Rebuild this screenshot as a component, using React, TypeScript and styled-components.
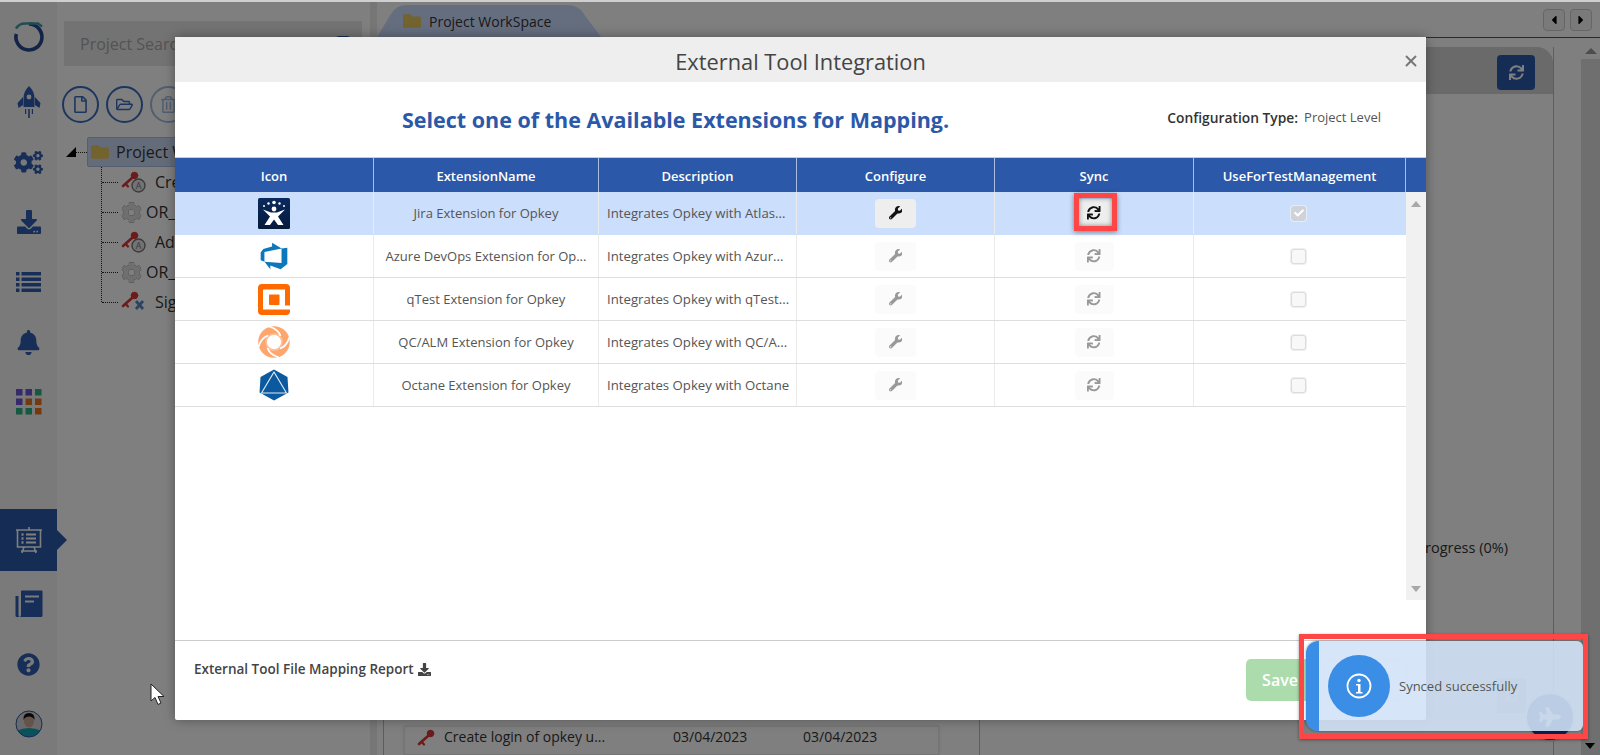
import React from "react";
import styled, { createGlobalStyle } from "styled-components";
import { X } from "lucide-react";
import {
  FaBell,
  FaCog,
  FaCogs,
  FaDownload,
  FaFolder,
  FaPlane,
  FaQuestionCircle,
  FaRegFile,
  FaRegFolderOpen,
  FaRegTrashAlt,
  FaSync,
  FaWrench,
  FaCheck,
  FaCaretLeft,
  FaCaretRight,
} from "react-icons/fa";

const FONT = `"Open Sans", "Noto Sans", "Liberation Sans", sans-serif`;
const BLUE = "#2b58a8";

const GlobalStyle = createGlobalStyle`
  html, body {
    margin: 0;
    height: 100%;
    overflow: hidden;
    background: #fff;
    font-family: ${FONT};
  }
  * {
    box-sizing: border-box;
  }
`;

const Page = styled.div`
  width: 1600px;
  height: 755px;
  display: flex;
  flex-direction: column;
  position: relative;
  overflow: hidden;
`;

const TopStrip = styled.div`
  height: 2px;
  flex: none;
  background: #cfcfcf;
  position: relative;
  z-index: 20;
`;

const Shell = styled.div`
  flex: 1;
  display: flex;
  min-height: 0;
`;

/* left rail */
const Rail = styled.nav`
  width: 57px;
  flex: none;
  background: #f4f4f4;
  display: flex;
  flex-direction: column;
  align-items: stretch;
  padding-bottom: 1px;
`;

const LogoItem = styled.div`
  height: 70px;
  display: flex;
  align-items: center;
  justify-content: center;
`;

const RailItem = styled.div<{ $active?: boolean }>`
  height: ${(p) => (p.$active ? "62px" : "60px")};
  margin-bottom: ${(p) => (p.$active ? "3px" : "0")};
  flex: none;
  display: flex;
  align-items: center;
  justify-content: center;
  position: relative;
  color: ${(p) => (p.$active ? "#fff" : "#2f5fb0")};
  background: ${(p) => (p.$active ? BLUE : "transparent")};
  font-size: 26px;

  ${(p) =>
    p.$active &&
    `&::after {
      content: "";
      position: absolute;
      left: 100%;
      top: 21px;
      border-left: 10px solid ${BLUE};
      border-top: 10px solid transparent;
      border-bottom: 10px solid transparent;
    }`}
`;

const RailSpacer = styled.div`
  flex: 1;
`;

/* tree panel */
const TreePanel = styled.aside`
  width: 313px;
  flex: none;
  background: #fff;
  padding: 19px 8px 0 7px;
`;

const SearchBox = styled.div`
  height: 45px;
  background: #e6e6e6;
  color: #a8a8a8;
  font-size: 16px;
  padding: 0 12px 0 16px;
  display: flex;
  align-items: center;
  justify-content: space-between;
`;

const SearchMark = styled.div`
  width: 14px;
  height: 16px;
  border-radius: 3px;
  background: ${BLUE};
`;

const TreeTools = styled.div`
  display: flex;
  gap: 7px;
  margin: 20px 0 14px -2px;
`;

const CircleTool = styled.div<{ $faded?: boolean }>`
  width: 37px;
  height: 37px;
  border-radius: 50%;
  border: 2px solid ${(p) => (p.$faded ? "#a3bce4" : "#3a6cc0")};
  color: ${(p) => (p.$faded ? "#a3bce4" : "#3a6cc0")};
  display: flex;
  align-items: center;
  justify-content: center;
  font-size: 17px;
`;

const TreeRoot = styled.div`
  display: flex;
  align-items: center;
  position: relative;
  margin-left: 23px;
  height: 30px;
  background: #c9d9f2;
  border: 1px solid #a9bfe2;
  border-radius: 2px;
  padding-left: 3px;
  font-size: 16px;
  color: #333;
  gap: 7px;
  white-space: nowrap;

  &::before {
    content: "";
    position: absolute;
    left: -22px;
    top: 9px;
    border-bottom: 10px solid #000;
    border-left: 10px solid transparent;
  }

  &::after {
    content: "";
    position: absolute;
    left: -12px;
    top: 14px;
    width: 11px;
    border-top: 1px dotted #222;
  }
`;

const TreeList = styled.div`
  margin-left: 37px;
  border-left: 1px dotted #222;
  height: 135px;
`;

const TreeRow = styled.div<{ $indent: number }>`
  height: 30px;
  display: flex;
  align-items: center;
  position: relative;
  padding-left: 19px;
  gap: ${(p) => p.$indent}px;
  font-size: 16px;
  color: #333;
  white-space: nowrap;

  &::before {
    content: "";
    width: 16px;
    position: absolute;
    left: 0;
    top: 15px;
    border-top: 1px dotted #222;
  }
`;

const GearIcon = styled(FaCog)`
  color: #dedede;
  font-size: 21px;
  filter: drop-shadow(0 0 0.6px #333);
`;

const Splitter = styled.div`
  width: 7px;
  flex: none;
  background: #ececec;
`;

/* workspace behind the dialog */
const Workspace = styled.main`
  flex: 1;
  min-width: 0;
  display: flex;
  flex-direction: column;
  background: #fff;
`;

const TabStrip = styled.div`
  height: 36px;
  flex: none;
  border-bottom: 1px solid ${BLUE};
  display: flex;
  align-items: flex-end;
  padding: 0 8px 0 0;
`;

const Tab = styled.div`
  width: 224px;
  height: 32px;
  background: #cbdcff;
  clip-path: path("M0 32 L14 9 Q19 0 30 0 H190 Q202 0 207 9 L224 32 Z");
  display: flex;
  align-items: center;
  gap: 8px;
  padding-left: 26px;
  font-size: 14px;
  color: #333;
`;

const FolderIcon = styled(FaFolder)`
  color: #e7c65c;
  font-size: 18px;
  flex: none;
`;

const NavButtons = styled.div`
  margin-left: auto;
  display: flex;
  gap: 5px;
  align-self: flex-start;
  margin-top: 7px;
`;

const NavButton = styled.div`
  width: 22px;
  height: 22px;
  border: 1px solid #ccc;
  border-radius: 4px;
  display: flex;
  align-items: center;
  justify-content: center;
  font-size: 14px;
  color: #000;
  background: #f4f4f4;
`;

const WorkBody = styled.div`
  flex: 1;
  min-height: 0;
  display: flex;
  padding-left: 6px;
`;

const Panel = styled.section`
  width: 1171px;
  flex: none;
  margin-top: 9px;
  display: flex;
  flex-direction: column;
  border-left: 1px solid #bbb;
  border-right: 1px solid #bbb;
`;

const PanelHead = styled.div`
  height: 47px;
  flex: none;
  background: #d4d4d4;
  border-radius: 0 16px 0 0;
  display: flex;
  justify-content: flex-end;
  padding: 8px 18px 0 0;
`;

const HeadButton = styled.div`
  width: 38px;
  height: 35px;
  background: ${BLUE};
  border-radius: 4px;
  color: #fff;
  font-size: 15px;
  display: flex;
  align-items: center;
  justify-content: center;
`;

const PanelBody = styled.div`
  flex: 1;
  display: grid;
  grid-template-columns: 595px 1fr;
  min-height: 0;
`;

const LeftColumn = styled.div`
  display: flex;
  flex-direction: column;
  justify-content: flex-start;
  padding: 632px 40px 0 20px;
  overflow: hidden;
`;

const RightColumn = styled.div`
  border-left: 1px solid #bbb;
  display: flex;
  flex-direction: column;
  align-items: flex-end;
  padding: 444px 45px 0 0;
`;

const Legend = styled.div`
  font-size: 14.5px;
  color: #333;
`;

const FaintSync = styled.div`
  width: 29px;
  height: 35px;
  background: #d0d0d0;
  color: #fff;
  display: flex;
  align-items: center;
  justify-content: center;
  font-size: 13px;
  margin: 121px -18px 0 0;
`;

const TestCard = styled.div`
  height: 40px;
  border: 1px solid #e8e8e8;
  display: grid;
  grid-template-columns: 27px 229px 130px 1fr;
  align-items: center;
  padding: 0 0 8px 12px;
  font-size: 14px;
  color: #333;
  box-shadow: 0 0 3px rgba(0, 0, 0, 0.15);
`;

const PageScroll = styled.div`
  width: 19px;
  margin-left: auto;
  flex: none;
  display: flex;
  flex-direction: column;
  margin-top: 2px;
`;

const PageScrollTop = styled.div`
  height: 19px;
  flex: none;
  background: #fff;
  display: flex;
  justify-content: center;
  padding-top: 8px;

  &::before {
    content: "";
    height: 0;
    border-bottom: 6px solid #999;
    border-left: 6px solid transparent;
    border-right: 6px solid transparent;
  }
`;

const PageScrollTrack = styled.div`
  flex: 1;
  background: #dedede;
`;

const Backdrop = styled.div`
  position: absolute;
  inset: 2px 0 0 0;
  background: rgba(0, 0, 0, 0.5);
  z-index: 5;
`;

const ChatBubble = styled.div`
  position: absolute;
  left: 1525px;
  top: 692px;
  width: 50px;
  height: 50px;
  border-radius: 50%;
  background: #1c3c90;
  color: #fff;
  border: 2px solid #eee;
  display: flex;
  align-items: center;
  justify-content: center;
  font-size: 22px;
`;

const BottomCaret = styled.div`
  position: absolute;
  left: 1585px;
  top: 743px;
  border-top: 6px solid #000;
  border-left: 5px solid transparent;
  border-right: 5px solid transparent;
`;

/* dialog */
const Modal = styled.div`
  position: absolute;
  left: 175px;
  top: 37px;
  width: 1251px;
  height: 683px;
  background: #fff;
  z-index: 10;
  display: flex;
  flex-direction: column;
  border-radius: 2px;
  box-shadow: 0 0 12px rgba(0, 0, 0, 0.35);
`;

const ModalHeader = styled.header`
  height: 45px;
  flex: none;
  background: #eeeeee;
  display: flex;
  align-items: center;
  justify-content: center;
  position: relative;
  font-size: 21.8px;
  color: #444;
  padding-top: 3px;
`;

const CloseButton = styled(X)`
  position: absolute;
  right: 6px;
  top: 15px;
  color: #777;
`;

const Heading = styled.div`
  height: 75px;
  flex: none;
  display: flex;
  align-items: center;
  padding: 0 45px 0 227px;
`;

const HeadingTitle = styled.h2`
  margin: 0;
  font-size: 21.5px;
  font-weight: 700;
  color: ${BLUE};
`;

const ConfigType = styled.div`
  margin: 0 0 5px auto;
  font-size: 13px;
  color: #555;
  display: flex;
  gap: 6px;

  b {
    color: #333;
    font-size: 13.8px;
    font-weight: 600;
  }
`;

const COLUMNS = "199px 225px 198px 198px 199px 212px";

const TableHead = styled.div`
  height: 35px;
  flex: none;
  display: grid;
  grid-template-columns: ${COLUMNS} 20px;
  background: ${BLUE};
  border-top: 1px solid #ccc;
`;

const HeadCell = styled.div`
  display: flex;
  align-items: center;
  justify-content: center;
  color: #fff;
  font-size: 13px;
  font-weight: 600;
  padding-top: 1px;
  border-right: 1px solid #a9bde0;

  &:last-child {
    border-right: 0;
  }
`;

const TableBody = styled.div`
  height: 408px;
  flex: none;
  display: flex;
`;

const Rows = styled.div`
  flex: 1;
  min-width: 0;
`;

const Row = styled.div<{ $selected?: boolean }>`
  height: 43px;
  display: grid;
  grid-template-columns: ${COLUMNS};
  background: ${(p) => (p.$selected ? "#cbdefc" : "#fff")};
  border-bottom: 1px solid ${(p) => (p.$selected ? "#cbdefc" : "#dedede")};
`;

const Cell = styled.div<{ $left?: boolean }>`
  display: flex;
  align-items: center;
  justify-content: ${(p) => (p.$left ? "flex-start" : "center")};
  padding-left: ${(p) => (p.$left ? "8px" : "0")};
  border-right: 1px solid #ebebeb;
  font-size: ${(p) => (p.$left ? "13.2px" : "13px")};
  color: #555;
  white-space: nowrap;
  position: relative;

  &:last-child {
    border-right: 0;
  }
`;

const ToolButton = styled.div<{ $on?: boolean; $wide?: boolean }>`
  width: ${(p) => (p.$wide ? "41px" : "39px")};
  height: 29px;
  border-radius: 4px;
  background: ${(p) => (p.$on ? "#eeeeee" : "#fbfbfb")};
  color: ${(p) => (p.$on ? "#111" : "#999")};
  font-size: 13.5px;
  display: flex;
  align-items: center;
  justify-content: center;
`;

const HighlightBox = styled.div`
  position: absolute;
  left: 79px;
  top: 1px;
  width: 43px;
  height: 38px;
  border: 5px solid #ff4646;
  box-shadow: 0 1px 5px rgba(0, 0, 0, 0.45), inset 0 0 5px rgba(0, 0, 0, 0.45);
`;

const CheckBox = styled.div<{ $checked?: boolean }>`
  width: 15px;
  height: 15px;
  margin-right: 3px;
  border-radius: 3px;
  background: ${(p) => (p.$checked ? "#cfd3d9" : "#f8f8f8")};
  border: 1px solid ${(p) => (p.$checked ? "#cfd3d9" : "#dcdcdc")};
  box-shadow: 0 0 0 1px ${(p) => (p.$checked ? "#e4ecf8" : "#efefef")};
  color: #fff;
  font-size: 10px;
  display: flex;
  align-items: center;
  justify-content: center;
`;

const ScrollTrack = styled.div`
  width: 20px;
  flex: none;
  background: #f1f1f1;
  display: flex;
  flex-direction: column;
  justify-content: space-between;
  align-items: center;
  padding: 9px 0 8px;
`;

const ScrollArrow = styled.div<{ $down?: boolean }>`
  border-left: 5px solid transparent;
  border-right: 5px solid transparent;
  ${(p) => (p.$down ? "border-top: 6px solid #a8a8a8;" : "border-bottom: 6px solid #a8a8a8;")}
`;

const ModalFooter = styled.footer`
  margin-top: auto;
  height: 80px;
  flex: none;
  border-top: 1px solid #ccc;
  display: flex;
  justify-content: space-between;
  padding: 18px 19px 0 19px;
`;

const ReportLink = styled.div`
  display: flex;
  align-items: center;
  gap: 4px;
  height: 20px;
  font-size: 13.5px;
  font-weight: 600;
  color: #444;
  svg {
    font-size: 13px;
  }
`;

const FooterButtons = styled.div`
  display: flex;
  gap: 10px;
`;

const SaveButton = styled.div`
  width: 68px;
  height: 42px;
  border-radius: 5px;
  background: #acdcac;
  color: #fff;
  font-size: 16px;
  font-weight: 600;
  display: flex;
  align-items: center;
  justify-content: center;
`;

const CancelButton = styled.div`
  width: 83px;
  height: 42px;
  border-radius: 5px;
  border: 1px solid #e8e8e8;
  color: #999;
  font-size: 16px;
  display: flex;
  align-items: center;
  justify-content: center;
`;

/* toast and its annotation */
const Toast = styled.div`
  position: absolute;
  left: 1306px;
  top: 641px;
  width: 277px;
  height: 90px;
  z-index: 15;
  background: rgba(209, 227, 247, 0.89);
  border-left: 13px solid #3a8ee6;
  border-radius: 12px 6px 6px 12px;
  box-shadow: 0 0 3px rgba(0, 0, 0, 0.4);
  display: flex;
  align-items: center;
  gap: 9px;
  padding-left: 9px;
  font-size: 13px;
  color: #555;
`;

const ToastIcon = styled.div`
  width: 62px;
  height: 62px;
  border-radius: 50%;
  background: #3a8ee6;
  flex: none;
  display: flex;
  align-items: center;
  justify-content: center;
`;

const ToastFrame = styled.div`
  position: absolute;
  left: 1299px;
  top: 634px;
  width: 289px;
  height: 105px;
  z-index: 16;
  border: 5px solid #ff4646;
  box-shadow: 0 1px 3px rgba(0, 0, 0, 0.4);
`;

const Cursor = styled.svg`
  position: absolute;
  left: 150px;
  top: 683px;
  z-index: 18;
`;

const BrandLogo = () => (
  <svg width="32" height="32" viewBox="0 0 32 32" fill="none">
    <path d="M16 3 A13 13 0 1 1 3.3 13" stroke="#244a8f" strokeWidth="3.6" />
    <path d="M3 7.5 Q6 2.5 12 2.5 H25 L29 5.5" stroke="#3f9aa6" strokeWidth="2.6" />
  </svg>
);

const RocketIcon = () => (
  <svg width="24" height="34" viewBox="0 0 24 34" fill="currentColor">
    <path d="M12 1 C16 5 17.5 9 17.5 13 L17.5 22 L6.5 22 L6.5 13 C6.5 9 8 5 12 1 Z" />
    <path d="M6 12 L0.5 18 L1.5 23 L6 20 Z M18 12 L23.5 18 L22.5 23 L18 20 Z" />
    <circle cx="12" cy="12" r="2.4" fill="#f4f4f4" />
    <path d="M11.2 24 h1.6 v9 h-1.6 Z M8 24 h1.2 v5 H8 Z M14.8 24 H16 v5 h-1.2 Z" />
  </svg>
);

const ListIcon = () => (
  <svg width="25" height="20" viewBox="0 0 25 20" fill="currentColor">
    {[0, 5.5, 11, 16.5].map((y) => (
      <g key={y}>
        <rect x="0" y={y} width="3.5" height="3.5" />
        <rect x="5.5" y={y} width="19.5" height="3.5" />
      </g>
    ))}
  </svg>
);

const GridIcon = () => {
  const colours = ["#6a56d8", "#6a56d8", "#2fb380", "#6a56d8", "#e8741e", "#e8741e", "#2fb380", "#2fb380", "#e8741e"];
  return (
    <svg width="26" height="26" viewBox="0 0 26 26">
      {colours.map((c, i) => (
        <rect key={i} x={(i % 3) * 9.5} y={Math.floor(i / 3) * 9.5} width="6.5" height="6.5" fill={c} />
      ))}
    </svg>
  );
};

const BoardIcon = () => (
  <svg width="28" height="28" viewBox="0 0 28 28" fill="none" stroke="#fff" strokeWidth="1.6">
    <path d="M1 4 H27 M2.5 4 V21 H25.5 V4 M14 1 V4 M9 21 L7 27 M19 21 L21 27 M6 25 H22" />
    <path d="M11 8.5 H21 M11 12.5 H21 M11 16.5 H21" strokeWidth="2" />
    <path d="M6.5 8.5 H8.5 M6.5 12.5 H8.5 M6.5 16.5 H8.5" strokeWidth="2.4" />
  </svg>
);

const BookIcon = () => (
  <svg width="28" height="28" viewBox="0 0 28 28" fill="currentColor">
    <path d="M6 1.5 Q6 0.5 7 0.5 H26.5 Q27.5 0.5 27.5 1.5 V25.5 Q27.5 27 26 27 H5 Q6 26 6 25 Z" />
    <path d="M0.5 6 H3.5 V25 Q3.5 26 4.5 27 H2 Q0.5 27 0.5 25.5 Z" />
    <path d="M10 6.5 H24 M10 11.5 H19" stroke="#f4f4f4" strokeWidth="1.8" />
  </svg>
);

const Avatar = () => (
  <svg width="28" height="28" viewBox="0 0 28 28">
    <clipPath id="avatar-clip">
      <circle cx="14" cy="14" r="13" />
    </clipPath>
    <circle cx="14" cy="14" r="13" fill="#d4d4d4" />
    <g clipPath="url(#avatar-clip)">
      <path d="M1 28 V21 Q8 18 14 18 Q20 18 27 21 V28 Z" fill="#17a2b8" />
      <ellipse cx="14" cy="11" rx="5" ry="6.5" fill="#c9a68c" />
      <path d="M8.5 10 Q8 3 14 3 Q20 3 19.5 10 Q18 6.5 14 6.5 Q10 6.5 8.5 10 Z" fill="#111" />
    </g>
    <circle cx="14" cy="14" r="13" fill="none" stroke="#2b58a8" strokeWidth="1" />
  </svg>
);

const KeyShape = () => (
  <g fill="none" stroke="#d93535" strokeLinecap="round">
    <path d="M2 16 L11 8" strokeWidth="2.6" />
    <path d="M4.5 13.8 L7 16.5" strokeWidth="2.2" />
    <circle cx="13.5" cy="5.5" r="3.3" fill="#d93535" strokeWidth="1" />
  </g>
);

const BadgeLetter = styled.text`
  font-family: ${FONT};
  font-size: 9px;
  fill: #777;
`;

const ActionKey = () => (
  <svg width="26" height="24" viewBox="0 0 26 24">
    <KeyShape />
    <circle cx="17.5" cy="15.5" r="6.5" fill="#e6e6e6" stroke="#777" strokeWidth="1.4" />
    <BadgeLetter x="17.5" y="18.8" textAnchor="middle">
      A
    </BadgeLetter>
  </svg>
);

const SignKey = () => (
  <svg width="26" height="24" viewBox="0 0 26 24">
    <KeyShape />
    <path d="M15 11 L22 19 M22 11 L15 19" stroke="#5b86c4" strokeWidth="2.8" />
  </svg>
);

const SmallKey = () => (
  <svg width="18" height="18" viewBox="0 0 18 18">
    <KeyShape />
  </svg>
);

const JiraLogo = () => (
  <svg width="32" height="31" viewBox="0 0 32 31">
    <defs>
      <linearGradient id="jira-bg" x1="0" y1="0" x2="0" y2="1">
        <stop offset="0" stopColor="#0a2a5e" />
        <stop offset="1" stopColor="#061a3c" />
      </linearGradient>
    </defs>
    <rect width="32" height="31" rx="1.5" fill="url(#jira-bg)" />
    <circle cx="16" cy="4.5" r="1.8" fill="#fff" />
    <circle cx="10.5" cy="5.5" r="1.2" fill="#fff" />
    <circle cx="21.5" cy="5.5" r="1.2" fill="#fff" />
    <circle cx="6" cy="8" r="1" fill="#fff" />
    <circle cx="26" cy="8" r="1" fill="#fff" />
    <circle cx="16" cy="11" r="2.4" fill="#fff" />
    <path d="M5 11.5 L13 14.5 H19 L27 11.5 L20 18.5 L25.5 27 H20 L16 21.5 L12 27 H6.5 L12 18.5 Z" fill="#fff" />
  </svg>
);

const AzureLogo = () => (
  <svg width="30" height="30" viewBox="0 0 18 18">
    <path
      d="M17 4v9.74l-4 3.28-6.2-2.26V17l-3.51-4.59 10.23.8V4.44zm-3.41.49L7.85 1v2.29L2.58 4.84 1 6.87v4.61l2.26 1V6.57z"
      fill="#0c78bb"
    />
  </svg>
);

const QTestLogo = () => (
  <svg width="32" height="31" viewBox="0 0 32 31">
    <rect width="32" height="31" rx="4" fill="#ff6a00" />
    <path d="M5 5.5 H27 V21.5 H32 V25.5 H5 Z" fill="#fff" />
    <rect x="11" y="10.5" width="10.5" height="10.5" rx="0.8" fill="#ff6a00" />
  </svg>
);

const QcLogo = () => (
  <svg width="32" height="32" viewBox="0 0 32 32" fill="none">
    <circle cx="16" cy="16" r="11.5" stroke="#ffa66e" strokeWidth="8.5" />
    <circle cx="16" cy="16" r="8" stroke="#ffc39c" strokeWidth="1.5" />
    {[0, 90, 180, 270].map((r) => (
      <path
        key={r}
        transform={`rotate(${r} 16 16)`}
        d="M22.5 10 C21 5.5 16 2 11 0.5"
        stroke="#fff"
        strokeWidth="1.8"
      />
    ))}
  </svg>
);

const OctaneLogo = () => (
  <svg width="30" height="32" viewBox="0 0 30 32">
    <path d="M15 0.5 L28.5 8 L29.5 23.5 L15 31.5 L0.5 23.5 L1.5 8 Z" fill="#0b5aa0" />
    <path d="M15 3 L2.5 24 H27.5 Z" fill="#0b5aa0" stroke="#dfe9f4" strokeWidth="1.2" strokeLinejoin="round" />
  </svg>
);

const InfoGlyph = () => (
  <svg width="26" height="26" viewBox="0 0 26 26" fill="none" stroke="#fff">
    <circle cx="13" cy="13" r="11.5" strokeWidth="1.8" />
    <circle cx="13" cy="7.5" r="1.7" fill="#fff" stroke="none" />
    <path d="M10 11 H14.5 V19 H16.5 V20.5 H10 V19 H12 V12.5 H10 Z" fill="#fff" stroke="none" />
  </svg>
);

type Extension = {
  name: string;
  description: string;
  logo: React.ReactNode;
};

const extensions: Extension[] = [
  { name: "Jira Extension for Opkey", description: "Integrates Opkey with Atlas...", logo: <JiraLogo /> },
  { name: "Azure DevOps Extension for Op...", description: "Integrates Opkey with Azur...", logo: <AzureLogo /> },
  { name: "qTest Extension for Opkey", description: "Integrates Opkey with qTest...", logo: <QTestLogo /> },
  { name: "QC/ALM Extension for Opkey", description: "Integrates Opkey with QC/A...", logo: <QcLogo /> },
  { name: "Octane Extension for Opkey", description: "Integrates Opkey with Octane", logo: <OctaneLogo /> },
];

const treeItems = [
  { label: "Create login", icon: <ActionKey /> },
  { label: "OR_Login", icon: <GearIcon /> },
  { label: "Add Employee", icon: <ActionKey /> },
  { label: "OR_Employee", icon: <GearIcon /> },
  { label: "Sign out", icon: <SignKey /> },
];

const headers = ["Icon", "ExtensionName", "Description", "Configure", "Sync", "UseForTestManagement", ""];

export default function App() {
  return (
    <Page>
      <GlobalStyle />
      <TopStrip />
      <Shell>
        <Rail>
          <LogoItem>
            <BrandLogo />
          </LogoItem>
          <RailItem>
            <RocketIcon />
          </RailItem>
          <RailItem>
            <FaCogs size={29} />
          </RailItem>
          <RailItem>
            <FaDownload size={24} />
          </RailItem>
          <RailItem>
            <ListIcon />
          </RailItem>
          <RailItem>
            <FaBell size={25} />
          </RailItem>
          <RailItem>
            <GridIcon />
          </RailItem>
          <RailSpacer />
          <RailItem $active>
            <BoardIcon />
          </RailItem>
          <RailItem>
            <BookIcon />
          </RailItem>
          <RailItem>
            <FaQuestionCircle size={23} />
          </RailItem>
          <RailItem>
            <Avatar />
          </RailItem>
        </Rail>

        <TreePanel>
          <SearchBox>
            Project Search
            <SearchMark />
          </SearchBox>
          <TreeTools>
            <CircleTool>
              <FaRegFile />
            </CircleTool>
            <CircleTool>
              <FaRegFolderOpen />
            </CircleTool>
            <CircleTool $faded>
              <FaRegTrashAlt />
            </CircleTool>
          </TreeTools>
          <TreeRoot>
            <FolderIcon />
            Project WorkSpace
          </TreeRoot>
          <TreeList>
            {treeItems.map((item) => (
              <TreeRow key={item.label} $indent={item.label.startsWith("OR_") ? 4 : 8}>
                {item.icon}
                {item.label}
              </TreeRow>
            ))}
          </TreeList>
        </TreePanel>
        <Splitter />

        <Workspace>
          <TabStrip>
            <Tab>
              <FolderIcon />
              Project WorkSpace
            </Tab>
            <NavButtons>
              <NavButton>
                <FaCaretLeft />
              </NavButton>
              <NavButton>
                <FaCaretRight />
              </NavButton>
            </NavButtons>
          </TabStrip>
          <WorkBody>
            <Panel>
              <PanelHead>
                <HeadButton>
                  <FaSync />
                </HeadButton>
              </PanelHead>
              <PanelBody>
                <LeftColumn>
                  <TestCard>
                    <SmallKey />
                    <span>Create login of opkey u...</span>
                    <span>03/04/2023</span>
                    <span>03/04/2023</span>
                  </TestCard>
                </LeftColumn>
                <RightColumn>
                  <Legend>In Progress (0%)</Legend>
                  <FaintSync>
                    <FaSync />
                  </FaintSync>
                </RightColumn>
              </PanelBody>
            </Panel>
            <PageScroll>
              <PageScrollTop />
              <PageScrollTrack />
            </PageScroll>
          </WorkBody>
        </Workspace>
      </Shell>

      <ChatBubble>
        <FaPlane />
      </ChatBubble>
      <BottomCaret />
      <Backdrop />

      <Modal>
        <ModalHeader>
          External Tool Integration
          <CloseButton size={18} strokeWidth={2.6} />
        </ModalHeader>
        <Heading>
          <HeadingTitle>Select one of the Available Extensions for Mapping.</HeadingTitle>
          <ConfigType>
            <b>Configuration Type:</b> Project Level
          </ConfigType>
        </Heading>
        <TableHead>
          {headers.map((h, i) => (
            <HeadCell key={i}>{h}</HeadCell>
          ))}
        </TableHead>
        <TableBody>
          <Rows>
            {extensions.map((ext, i) => (
              <Row key={ext.name} $selected={i === 0}>
                <Cell>{ext.logo}</Cell>
                <Cell>{ext.name}</Cell>
                <Cell $left>{ext.description}</Cell>
                <Cell>
                  <ToolButton $on={i === 0} $wide>
                    <FaWrench />
                  </ToolButton>
                </Cell>
                <Cell>
                  <ToolButton $on={i === 0}>
                    <FaSync />
                  </ToolButton>
                  {i === 0 && <HighlightBox />}
                </Cell>
                <Cell>
                  <CheckBox $checked={i === 0}>{i === 0 && <FaCheck />}</CheckBox>
                </Cell>
              </Row>
            ))}
          </Rows>
          <ScrollTrack>
            <ScrollArrow />
            <ScrollArrow $down />
          </ScrollTrack>
        </TableBody>
        <ModalFooter>
          <ReportLink>
            External Tool File Mapping Report <FaDownload />
          </ReportLink>
          <FooterButtons>
            <SaveButton>Save</SaveButton>
            <CancelButton>Cancel</CancelButton>
          </FooterButtons>
        </ModalFooter>
      </Modal>

      <Toast>
        <ToastIcon>
          <InfoGlyph />
        </ToastIcon>
        Synced successfully
      </Toast>
      <ToastFrame />

      <Cursor width="16" height="24" viewBox="0 0 16 24">
        <path d="M1 1 V18 L5 14.5 L8 21.5 L11 20 L8 13.5 H14 Z" fill="#fff" stroke="#222" strokeWidth="1" />
      </Cursor>
    </Page>
  );
}
